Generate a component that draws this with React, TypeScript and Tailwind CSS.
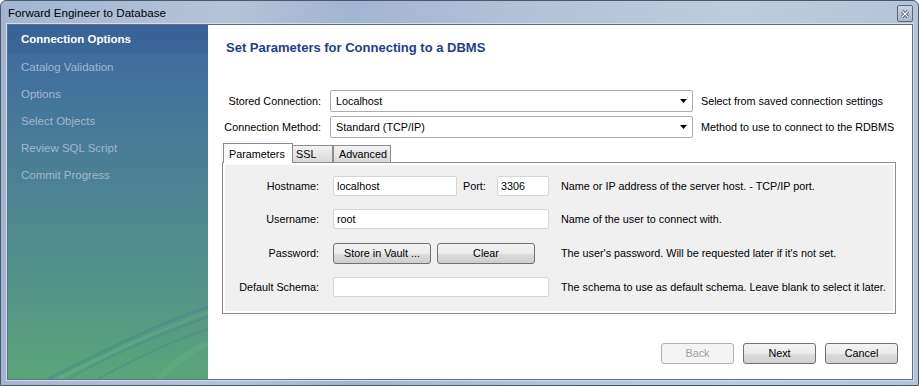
import React from "react";

const steps = [
  "Catalog Validation",
  "Options",
  "Select Objects",
  "Review SQL Script",
  "Commit Progress",
];

function ComboArrow() {
  return (
    <svg width="7" height="4" viewBox="0 0 7 4" className="shrink-0">
      <polygon points="0,0 7,0 3.5,4" fill="#000" />
    </svg>
  );
}

function Combo({ value }: { value: string }) {
  return (
    <div className="flex h-[22px] w-[363px] items-center justify-between rounded-[2px] border border-[#abadb3] bg-white pl-[5px] pr-[5px]">
      <span>{value}</span>
      <ComboArrow />
    </div>
  );
}

function Field({ value, w }: { value?: string; w: string }) {
  return (
    <div
      className={`flex h-[20px] ${w} items-center rounded-[2px] border border-[#d2d5da] bg-white pl-[3px]`}
    >
      {value}
    </div>
  );
}

function Btn({ label, disabled, w }: { label: string; disabled?: boolean; w: string }) {
  return (
    <div
      className={`flex h-[21px] ${w} items-center justify-center rounded-[3px] border ${
        disabled
          ? "border-[#adb2b5] bg-[#f4f4f4] text-[#a0a0a0]"
          : "border-[#707070] bg-[linear-gradient(180deg,#f3f3f3_0%,#ebebeb_50%,#dddddd_51%,#cfcfcf_100%)] text-black"
      }`}
    >
      {label}
    </div>
  );
}

function Sidebar() {
  return (
    <div className="relative w-[200px] shrink-0 overflow-hidden bg-linear-to-b from-[#3d68a1] via-[#4e8592] to-[#5ba47a]">
      <div className="flex h-[29px] items-center bg-black/[0.05] pl-[13px] text-[11.5px] font-bold text-white">
        Connection Options
      </div>
      {steps.map((s) => (
        <div key={s} className="flex h-[27px] items-center pl-[13px] text-[11.5px] text-[#a3b7cd]">
          {s}
        </div>
      ))}
      <svg
        className="absolute bottom-0 right-0"
        width="200"
        height="90"
        viewBox="0 0 200 90"
        fill="none"
      >
        <path d="M40 90 C 100 60, 150 35, 200 18" stroke="#3d7d95" strokeOpacity="0.35" strokeWidth="3" />
        <path d="M60 90 C 110 62, 160 42, 200 28" stroke="#3d7d95" strokeOpacity="0.3" strokeWidth="2" />
        <path d="M90 90 C 130 68, 170 50, 200 40" stroke="#3d7d95" strokeOpacity="0.3" strokeWidth="2" />
        <path d="M50 90 C 105 62, 155 40, 200 23" stroke="#9fd0b0" strokeOpacity="0.15" strokeWidth="2" />
        <path d="M150 90 C 170 70, 185 60, 200 55" stroke="#76c28a" strokeOpacity="0.2" strokeWidth="6" />
      </svg>
    </div>
  );
}

function ParamsPanel() {
  return (
    <div className="w-[674px]">
      <div className="relative z-10 flex h-[19px] items-end pl-[1px]">
        <div className="mb-[-1px] flex h-[20px] w-[70px] items-start border border-b-0 border-[#898c95] bg-white pl-[5px] pt-[2px]">
          Parameters
        </div>
        <div className="flex h-[17px] w-[40px] items-center border border-b-0 border-l-0 border-[#898c95] bg-linear-to-b from-[#f3f3f3] to-[#d8d8d8] pl-[3px]">
          SSL
        </div>
        <div className="flex h-[17px] w-[58px] items-center border border-b-0 border-[#898c95] bg-linear-to-b from-[#f3f3f3] to-[#d8d8d8] pl-[5px]">
          Advanced
        </div>
      </div>
      <div className="h-[152px] border border-[#898c95] bg-white p-[2px]">
        <div className="grid h-full grid-cols-[94px_216px_1fr] content-start gap-x-[14px] bg-[#f0f0f0] pt-[11px]">
          <div className="flex h-[20px] items-center justify-end">Hostname:</div>
          <div className="flex h-[20px] items-center">
            <Field value="localhost" w="w-[124px]" />
            <span className="ml-[6px]">Port:</span>
            <div className="ml-auto">
              <Field value="3306" w="w-[52px]" />
            </div>
          </div>
          <div className="-ml-[2px] flex h-[20px] items-center">
            Name or IP address of the server host. - TCP/IP port.
          </div>

          <div className="mt-[13px] flex h-[20px] items-center justify-end">Username:</div>
          <div className="mt-[13px]">
            <Field value="root" w="w-[216px]" />
          </div>
          <div className="-ml-[2px] mt-[13px] flex h-[20px] items-center">
            Name of the user to connect with.
          </div>

          <div className="mt-[14px] flex h-[20px] items-center justify-end">Password:</div>
          <div className="mt-[14px] flex gap-[6px]">
            <Btn label="Store in Vault ..." w="w-[98px]" />
            <Btn label="Clear" w="w-[98px]" />
          </div>
          <div className="-ml-[2px] mt-[14px] flex h-[20px] items-center">
            The user's password. Will be requested later if it's not set.
          </div>

          <div className="mt-[13px] flex h-[20px] items-center justify-end">Default Schema:</div>
          <div className="mt-[13px]">
            <Field w="w-[216px]" />
          </div>
          <div className="-ml-[2px] mt-[13px] flex h-[20px] items-center">
            The schema to use as default schema. Leave blank to select it later.
          </div>
        </div>
      </div>
    </div>
  );
}

export default function App() {
  return (
    <div className="flex h-[386px] w-[919px] flex-col rounded-t-[6px] border border-[#4b586c] bg-[linear-gradient(90deg,#a3b6d1_0%,#b3c4da_25%,#a2b5d0_38%,#b0c1d9_55%,#bccbdf_80%,#b3c4da_100%)] font-['Liberation_Sans',Arial,sans-serif] text-[10.8px] text-black">
      <div className="flex h-[23px] shrink-0 items-start justify-between pl-[7px] pr-[5px] pt-[4px]">
        <span className="text-[11.6px] leading-[16px] text-black">Forward Engineer to Database</span>
        <div className="flex h-[17px] w-[16px] items-center justify-center rounded-[2px] border border-[#5a6679] bg-linear-to-b from-[#c9d5e4] to-[#a8b8cd]">
          <svg width="8" height="8" viewBox="0 0 8 8">
            <path d="M1 1 L7 7 M7 1 L1 7" stroke="#3a4352" strokeWidth="3" />
            <path d="M1 1 L7 7 M7 1 L1 7" stroke="#fff" strokeWidth="1.4" />
          </svg>
        </div>
      </div>
      <div className="mb-[5px] ml-[6px] mr-[5px] flex flex-1 border border-[#5e6d82] bg-white shadow-[0_0_0_1px_#d3dde9]">
        <Sidebar />
        <div className="flex flex-1 flex-col pl-[14px]">
          <div className="ml-[4px] mt-[15px] text-[13px] font-bold leading-[16px] text-[#1f3d8e]">
            Set Parameters for Connecting to a DBMS
          </div>
          <div className="mt-[34px] grid grid-cols-[99px_363px_1fr] items-center gap-x-[9px] gap-y-[4px]">
            <div className="text-right">Stored Connection:</div>
            <Combo value="Localhost" />
            <div className="-ml-[1px]">Select from saved connection settings</div>
            <div className="text-right">Connection Method:</div>
            <Combo value="Standard (TCP/IP)" />
            <div className="-ml-[1px]">Method to use to connect to the RDBMS</div>
          </div>
          <div className="mt-[5px]">
            <ParamsPanel />
          </div>
          <div className="mb-[15px] mr-[14px] mt-auto flex justify-end gap-[9px]">
            <Btn label="Back" disabled w="w-[73px]" />
            <Btn label="Next" w="w-[73px]" />
            <Btn label="Cancel" w="w-[73px]" />
          </div>
        </div>
      </div>
    </div>
  );
}
